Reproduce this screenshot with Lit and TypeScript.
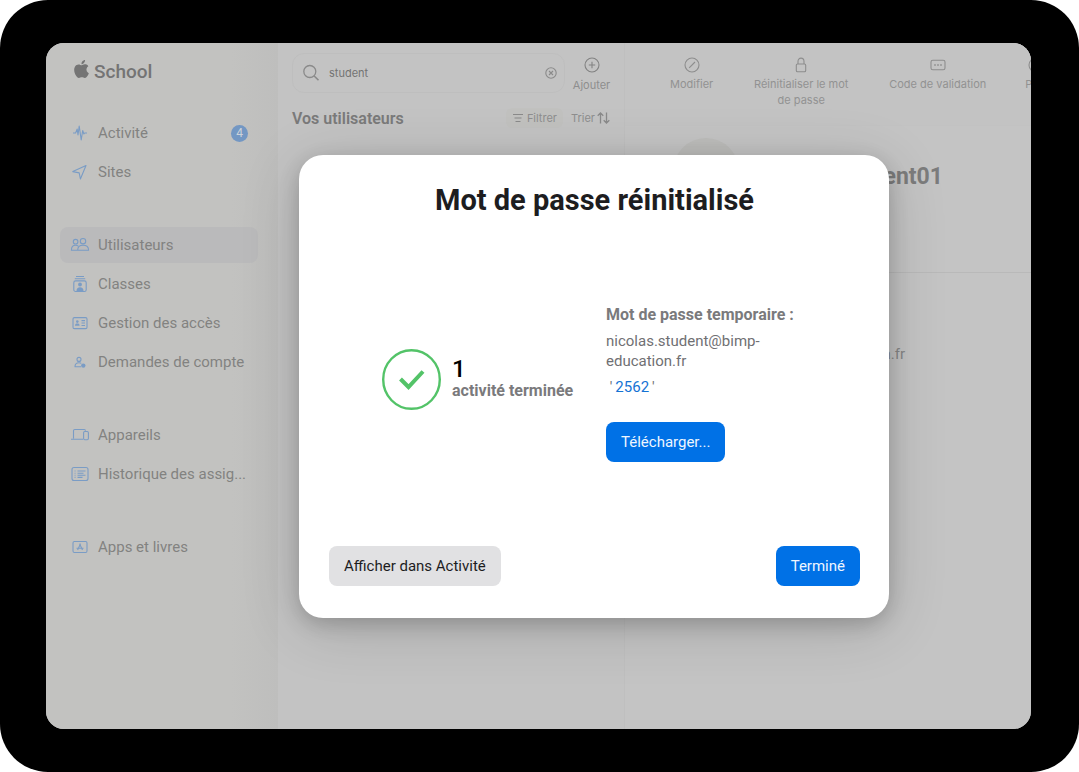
import { LitElement, html, css, svg, SVGTemplateResult } from "lit";
import { customElement } from "lit/decorators.js";

const icons: Record<string, SVGTemplateResult> = {
  activity: svg`<path d="M3 10h2.600l1.600-4 .8 6 1.200-9 2 14 1.500-9.500 1.200 3.500.8-1H17" />`,
  sites: svg`<path d="M2.800 9.600 16 3.500 10.400 17 9.200 10.900Z" />`,
  users: svg`<circle cx="5.600" cy="6.700" r="2.300" /><circle cx="13" cy="6.200" r="2.700" />
    <path d="M7.300 15.200H1.400c0-3 1.500-4.900 4.200-4.900 1.100 0 2 .3 2.700.9M7.700 15.200c0-3 2-4.900 5.300-4.900s5.600 1.900 5.600 4.900Z" />`,
  classes: svg`<path d="M6 2.500h8M4.800 4.700h10.400" /><rect x="3.800" y="6.900" width="12.400" height="10.600" rx="1.800" />
    <circle class="solid" cx="10" cy="10.500" r="1.900" /><path class="solid" d="M6.500 17c0-2.500 1.400-3.700 3.500-3.700s3.500 1.200 3.500 3.700Z" />`,
  access: svg`<rect x="3" y="4.600" width="14" height="11" rx="1.400" /><circle class="solid" cx="7.300" cy="8.600" r="1.300" />
    <path class="solid" d="M5 12.700c0-1.700.9-2.300 2.300-2.300s2.300.6 2.300 2.300Z" /><path d="M11.500 7.600H15M11.500 10H15M11.500 12.500H15" />`,
  requests: svg`<circle cx="9" cy="7.400" r="2" /><path d="M11 14.800H5c0-2.600 1.500-4 4-4 1 0 1.700.2 2.300.6" />
    <circle class="solid" cx="13.300" cy="13.600" r="2.200" />`,
  devices: svg`<path d="M3.500 13.500V5.800c0-.8.5-1.300 1.300-1.300h9.400c.8 0 1.300.5 1.300 1.200M1 14.200h12" />
    <rect x="13.600" y="6.500" width="4.800" height="8.300" rx="1.200" />`,
  history: svg`<rect x="2" y="3.500" width="16" height="13" rx="2" />
    <path d="M7.500 7h8M7.500 9.200h6M7.500 11.300h8M7.500 13.400h5M4.600 7h.9M4.600 9.200h.9M4.600 11.300h.9M4.600 13.400h.9" />`,
  apps: svg`<rect x="3" y="4.500" width="14" height="11" rx="1.400" /><path d="M10.500 6.800 7.600 12.900M9.600 6.800l2.900 6.100M6.500 11.300h7" />`,
};

const icon = (body: SVGTemplateResult) => html`<svg class="icon" viewBox="0 0 20 20" aria-hidden="true">${body}</svg>`;

interface NavItem { id: string; label: string; badge?: number; active?: boolean }

const navGroups: NavItem[][] = [
  [{ id: "activity", label: "Activité", badge: 4 }, { id: "sites", label: "Sites" }],
  [
    { id: "users", label: "Utilisateurs", active: true },
    { id: "classes", label: "Classes" },
    { id: "access", label: "Gestion des accès" },
    { id: "requests", label: "Demandes de compte" },
  ],
  [{ id: "devices", label: "Appareils" }, { id: "history", label: "Historique des assig..." }],
  [{ id: "apps", label: "Apps et livres" }],
];

const tools = [
  { label: "Modifier", body: svg`<circle cx="10" cy="10" r="7" /><path d="M7.200 12.800 13 7" />` },
  { label: "Réinitialiser le mot de passe", body: svg`<rect x="5.300" y="9" width="9.400" height="7.700" rx="1.300" /><path d="M7 9V6.500c0-2 1.200-3.400 3-3.400s3 1.400 3 3.400V9" />` },
  { label: "Code de validation", body: svg`<rect x="3" y="5.300" width="14" height="9.400" rx="1.800" /><path stroke-width="1.600" d="M6.200 10h1.600M9.200 10h1.600M12.200 10h1.600" />` },
  { label: "Plus", body: svg`<circle cx="10" cy="10" r="7" /><path stroke-width="1.600" d="M6.200 10h1.600M9.200 10h1.600M12.200 10h1.600" />` },
];

@customElement("school-sidebar")
export class SchoolSidebar extends LitElement {
  static styles = css`
    :host { display: block; padding: 16px 20px 16px 14px; background: linear-gradient(90deg, #c2c2c0 80%, #bebebd); }
    .brand { display: flex; align-items: center; gap: 5px; height: 24px; padding-left: 14px; margin: 0; font-size: 19px; font-weight: 500; color: #747474; }
    .logo { width: 15px; height: 20px; margin-bottom: 4px; fill: #747474; }
    nav { display: flex; flex-direction: column; gap: 37px; margin-top: 32px; }
    ul { display: flex; flex-direction: column; gap: 3px; list-style: none; margin: 0; padding: 0; }
    .item { display: flex; align-items: center; gap: 8px; height: 36px; padding: 0 10px; border-radius: 8px; color: #828281; text-decoration: none; font-size: 15px; white-space: nowrap; }
    .active { background: #bababb; }
    .icon { width: 20px; height: 20px; flex: none; fill: none; stroke: #7a9cc5; stroke-width: 1.1; stroke-linejoin: round; }
    .icon .solid { fill: #7a9cc5; stroke: none; }
    .badge { display: grid; place-items: center; width: 17px; height: 17px; margin-left: auto; border-radius: 50%; background: #7397c3; color: #cdd3da; font-size: 12px; }
  `;
  render() {
    return html`
      <h1 class="brand">
        <svg class="logo" viewBox="2 0 20 24" aria-hidden="true"><path d="M12.152 6.896c-.948 0-2.415-1.078-3.960-1.040-2.040.027-3.910 1.183-4.961 3.014-2.117 3.675-.546 9.103 1.519 12.090 1.013 1.454 2.208 3.090 3.792 3.039 1.520-.065 2.090-.987 3.935-.987 1.831 0 2.350.987 3.960.948 1.637-.026 2.676-1.480 3.676-2.948 1.156-1.688 1.636-3.325 1.662-3.415-.039-.013-3.182-1.221-3.220-4.857-.026-3.040 2.480-4.494 2.597-4.559-1.429-2.090-3.623-2.324-4.390-2.376-2-.156-3.675 1.090-4.610 1.090zM15.530 3.830c.843-1.012 1.400-2.427 1.245-3.830-1.207.052-2.662.805-3.532 1.818-.780.896-1.454 2.338-1.273 3.714 1.338.104 2.715-.688 3.559-1.701" /></svg>
        School
      </h1>
      <nav>
        ${navGroups.map((group) => html`<ul>${group.map((n) => html`
          <li><a class="item ${n.active ? "active" : ""}" href="#${n.id}">
            ${icon(icons[n.id])}<span>${n.label}</span>
            ${n.badge ? html`<span class="badge">${n.badge}</span>` : ""}
          </a></li>`)}</ul>`)}
      </nav>`;
  }
}

@customElement("user-list")
export class UserList extends LitElement {
  static styles = css`
    :host { display: block; padding: 10px 14px 16px 14px; background: #c3c3c3; border-right: 1px solid #bfbfbf; color: #8e8e8e; font-family: Inter, sans-serif; font-size: 11px; }
    .top { display: flex; gap: 8px; align-items: center; }
    .search { display: flex; flex: 1; min-width: 0; align-items: center; gap: 9px; height: 38px; padding: 0 7px 0 9px; border: 1px solid #bebebe; border-radius: 12px; }
    input { flex: 1; min-width: 0; padding: 0; border: 0; background: none; color: #737373; font: inherit; outline: none; }
    button { display: flex; align-items: center; padding: 0; border: 0; background: none; color: inherit; font: inherit; white-space: nowrap; }
    svg { fill: none; stroke: #8a8a8a; stroke-width: 1.1; flex: none; display: block; }
    .lens { width: 18px; height: 18px; }
    .clear { width: 12px; height: 12px; }
    .add { flex-direction: column; gap: 4px; line-height: 16px; width: 37px; padding-top: 4px; }
    .plus { width: 16px; height: 16px; stroke: #828282; }
    .heading { display: flex; align-items: center; height: 20px; margin-top: 15px; }
    h2 { flex: 1; margin: 0; font-family: Roboto, sans-serif; font-size: 16px; font-weight: 600; color: #7a7a7a; }
    .filter { gap: 3px; height: 20px; padding: 0 6px; margin-right: 8px; border-radius: 6px; background: #c1c1bf; }
    .lines { width: 12px; height: 12px; }
    .sort { gap: 2px; }
    .arrows { width: 13px; height: 14px; stroke-width: 1.300; }
  `;
  render() {
    return html`
      <div class="top">
        <div class="search">
          <svg class="lens" viewBox="0 0 18 18" aria-hidden="true"><circle cx="7.800" cy="7.500" r="6" stroke-width="1.300" /><path stroke-width="1.600" d="m12.200 12 4.300 4.300" /></svg>
          <input type="text" aria-label="Rechercher" value="student" />
          <button aria-label="Effacer"><svg class="clear" viewBox="0 0 12 12"><circle cx="6" cy="6" r="5.200" /><path d="m4 4 4 4M8 4 4 8" /></svg></button>
        </div>
        <button class="add"><svg class="plus" viewBox="0 0 16 16" aria-hidden="true"><circle cx="8" cy="8" r="7" /><path d="M8 4.800v6.400M4.800 8h6.400" /></svg>Ajouter</button>
      </div>
      <div class="heading">
        <h2>Vos utilisateurs</h2>
        <button class="filter"><svg class="lines" viewBox="0 0 12 12" aria-hidden="true"><path d="M1 2.500h10M2.500 6h7M3.500 9.500h5" /></svg>Filtrer</button>
        <button class="sort">Trier<svg class="arrows" viewBox="0 0 13 14" aria-hidden="true"><path d="M3.500 12.500V2M.7 4.800 3.500 2l2.800 2.800M9.500 1.500V12M6.700 9.200 9.500 12l2.800-2.800" /></svg></button>
      </div>`;
  }
}

@customElement("user-detail")
export class UserDetail extends LitElement {
  static styles = css`
    :host { display: block; min-width: 0; overflow: hidden; background: #c4c4c4; color: #8f8f8f; }
    .tools { display: flex; align-items: flex-start; gap: 39px; height: 70px; padding: 12px 0 0 45px; border-bottom: 1px solid #c2c2c2; background: #c3c3c3; }
    .tool { display: flex; flex: none; flex-direction: column; align-items: center; gap: 1px; max-width: 98px; padding: 0; border: 0; background: none; color: #929292; font: 11px/16px Inter, sans-serif; }
    .icon { width: 20px; height: 20px; fill: none; stroke: #8d8d8d; stroke-width: 1.1; }
    .person { display: flex; align-items: center; justify-content: space-between; height: 66px; padding: 12px 88px 68px 48px; border-bottom: 1px solid #b9b9b9; }
    .avatar { width: 66px; height: 66px; border-radius: 50%; background: #bdbdbb; }
    h2 { margin: 0; padding-top: 10px; font-size: 23px; font-weight: 700; color: #7c7c7c; }
    .mail { margin: 71px 0 0 46px; font-size: 15px; line-height: 20px; color: #868686; }
  `;
  render() {
    return html`
      <div class="tools">${tools.map((t) => html`<button class="tool">${icon(t.body)}<span>${t.label}</span></button>`)}</div>
      <header class="person"><div class="avatar"></div><h2>student01</h2></header>
      <p class="mail">nicolas.student@bimp-education.fr</p>`;
  }
}

@customElement("reset-dialog")
export class ResetDialog extends LitElement {
  static styles = css`
    :host { display: flex; flex-direction: column; box-sizing: border-box; width: 590px; min-height: 463px; padding: 28px 29px 32px 30px; border-radius: 24px; background: #fff; box-shadow: 0 6px 20px rgba(0, 0, 0, 0.18), 0 10px 60px rgba(0, 0, 0, 0.16); color: #707073; font-size: 15px; line-height: 20px; }
    h2 { margin: 0; text-align: center; font-size: 29px; line-height: 34px; font-weight: 700; color: #1d1d1f; }
    .body { display: flex; flex: 1; align-items: center; gap: 33px; padding: 4px 0 0 53px; }
    .status { display: flex; align-items: center; gap: 11px; width: 191px; padding-bottom: 8px; white-space: nowrap; }
    .check { width: 59px; height: 61px; flex: none; fill: none; stroke: #53c368; }
    .count { font-size: 24px; line-height: 24px; font-weight: 500; color: #000; }
    .strong { font-size: 16px; font-weight: 700; color: #7a7a7c; }
    p { margin: 0; }
    .result { display: flex; flex-direction: column; align-items: flex-start; gap: 6px; }
    .mail { max-width: 190px; }
    .code { white-space: pre; }
    .pin { padding: 0 3px; color: #1473d4; }
    button { height: 40px; padding: 0 15px; border: 0; border-radius: 8px; background: #0071e6; color: #eef6ff; font: inherit; }
    .download { margin-top: 19px; }
    .actions { display: flex; justify-content: space-between; }
    .plain { background: #e1e1e3; color: #1d1d1f; }
  `;
  render() {
    return html`
      <h2>Mot de passe réinitialisé</h2>
      <div class="body">
        <div class="status">
          <svg class="check" viewBox="0 0 59 61" preserveAspectRatio="none" aria-hidden="true"><ellipse cx="29.500" cy="30.500" rx="28.300" ry="29.300" stroke-width="2.400" /><path stroke-width="4" d="m18.500 30 8 8 14.500-15.500" /></svg>
          <div><p class="count">1</p><p class="strong">activité terminée</p></div>
        </div>
        <div class="result">
          <p class="strong">Mot de passe temporaire :</p>
          <p class="mail">nicolas.student@bimp-<br />education.fr</p>
          <p class="code"> '<span class="pin">2562</span>'</p>
          <button class="download">Télécharger...</button>
        </div>
      </div>
      <div class="actions"><button class="plain">Afficher dans Activité</button><button>Terminé</button></div>`;
  }
}

@customElement("app-root")
export class AppRoot extends LitElement {
  static styles = css`
    :host { display: block; background: #fff; font-family: Roboto, sans-serif; }
    .bezel { display: flex; box-sizing: border-box; min-height: 100vh; padding: 43px 48px 43px 46px; border-radius: 48px; background: #000; }
    .screen { display: grid; grid-template-columns: 232px 347px minmax(0, 1fr); flex: 1; min-width: 0; position: relative; overflow: hidden; border-radius: 18px; background: #c4c4c4; }
    .overlay { position: absolute; inset: 0; display: flex; align-items: center; justify-content: center; padding-left: 111px; }
  `;
  render() {
    return html`
      <div class="bezel">
        <main class="screen">
          <school-sidebar></school-sidebar>
          <user-list></user-list>
          <user-detail></user-detail>
          <div class="overlay"><reset-dialog role="dialog" aria-label="Mot de passe réinitialisé"></reset-dialog></div>
        </main>
      </div>`;
  }
}
